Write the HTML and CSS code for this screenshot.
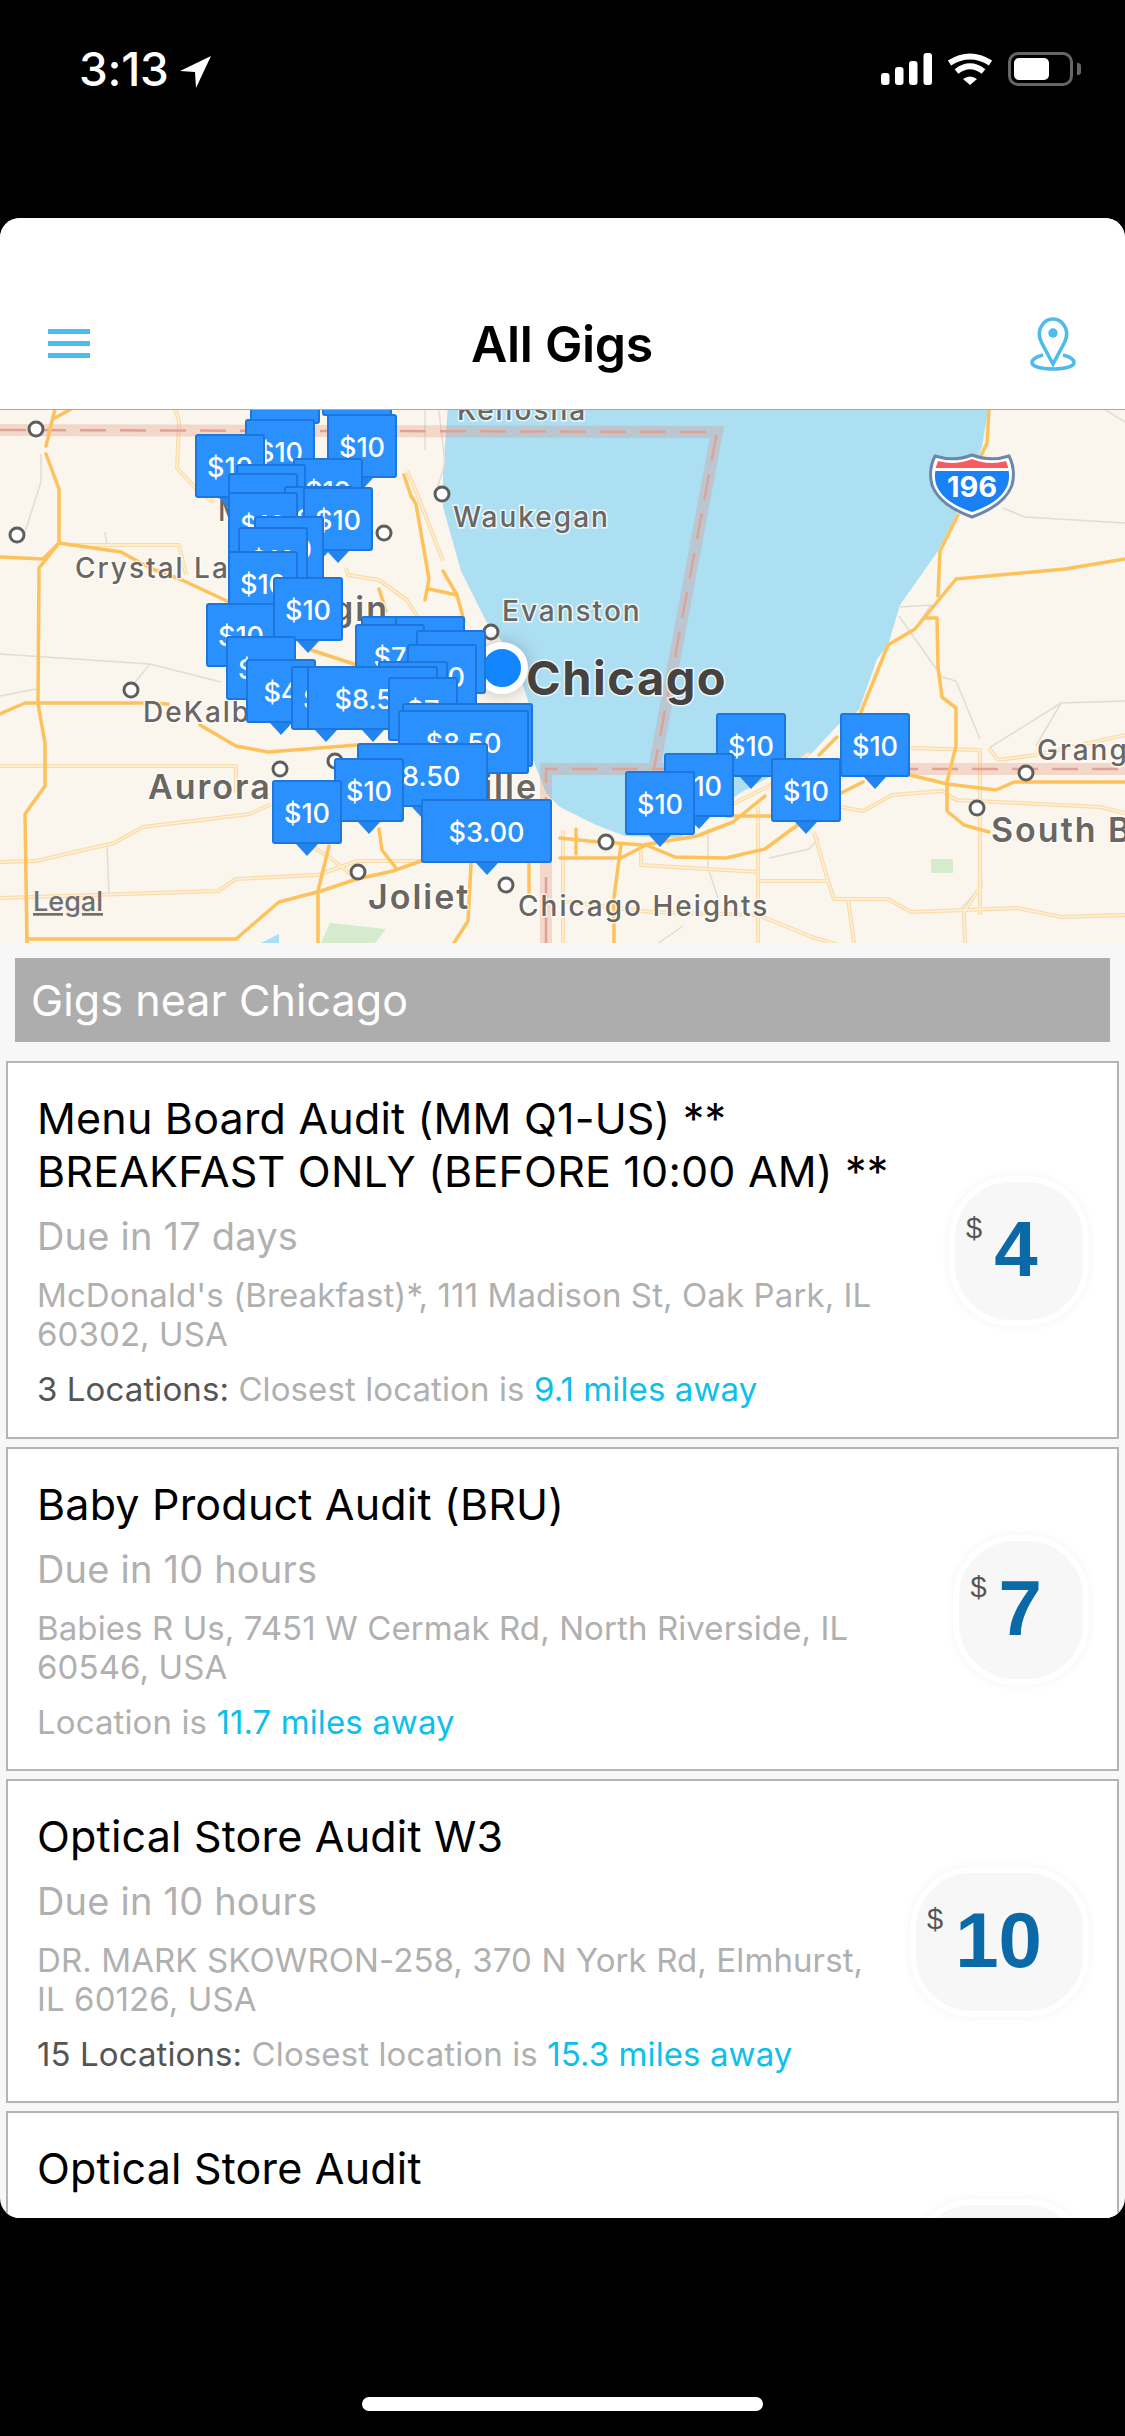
FILE: index.html
```html
<!DOCTYPE html>
<html lang="en">
<head>
<meta charset="utf-8">
<title>All Gigs</title>
<link rel="stylesheet" href="styles.css">
</head>
<body>
<div class="phone">
  <header class="status">
    <div class="status-left">
      <span class="time">3:13</span>
      <svg class="loc-arrow" viewBox="0 0 32 32"><path d="M31 0 0 15l15 1 1 16z"/></svg>
    </div>
    <div class="status-right">
      <svg class="signal" viewBox="0 0 52 32"><rect x="0" y="20" width="8.500" height="12" rx="3"/><rect x="14" y="14" width="8.500" height="18" rx="3"/><rect x="28" y="8" width="8.500" height="24" rx="3"/><rect x="42.500" y="0" width="8.500" height="32" rx="3"/></svg>
      <svg class="wifi" viewBox="0 0 46 32"><path class="wifi-arc" d="M2.500 10Q23-3 43.500 10"/><path class="wifi-arc" d="M9.500 18.500Q23 8 36.500 18.500"/><path class="wifi-fill" d="M16 26Q23 21 30 26L23 32Z"/></svg>
      <div class="battery"><div class="battery-level"></div></div>
      <div class="battery-nub"></div>
    </div>
  </header>

  <main class="screen">
    <nav class="nav">
      <div class="burger"><i></i><i></i><i></i></div>
      <h1 class="nav-title">All Gigs</h1>
      <svg class="nav-pin" viewBox="0 0 46 54"><path d="M23 47 11.500 25.500C8 18 9 12 12.500 7.500 15 4 19 2 23 2s8 2 10.500 5.500C37 12 38 18 34.500 25.500Z"/><circle class="nav-pin-dot" cx="23" cy="16" r="4.700"/><path d="M13 38C5 40 2 43 2 45.500 2 49.500 11 52 23 52s21-2.500 21-6.500c0-2.500-3-5.500-11-7.500"/></svg>
    </nav>

    <section class="map">
      <svg class="map-art" viewBox="0 410 1125 533" preserveAspectRatio="none">
        <defs>
          <g id="minor-roads">
            <path d="M0 766H236V793"/>
            <path d="M0 862 36 861 114 843 143 827 250 814 271 804"/>
            <path d="M0 898 218 891 236 879 318 875 357 861 446 861"/>
            <path d="M175 409 179 421 177 468 200 493 214 502"/>
            <path d="M68 545H179L186 575"/>
            <path d="M300 839 329 857 357 879"/>
            <path d="M346 568 348 575 379 580 407 600 425 629"/>
            <path d="M407 471 414 486 443 561"/>
            <path d="M911 748 980 750V915"/>
            <path d="M989 748 998 760 1036 755 1125 735"/>
            <path d="M841 807 863 811 892 795 942 791 956 800 1100 807 1125 813"/>
            <path d="M641 850V865L758 872V943"/>
            <path d="M760 881H828L834 899H888L911 912 1018 908 1061 917 1125 915"/>
            <path d="M814 832 828 881"/>
            <path d="M848 899 854 943"/>
            <path d="M978 890 964 912 965 943"/>
            <path d="M560 901 650 912 758 915 812 937 848 948"/>
            <path d="M809 753 769 786 733 804"/>
            <path d="M758 807V872"/>
            <path d="M563 830V943"/>
          </g>
          <clipPath id="shield-clip"><path d="M938 461Q955 466 972 459 989 466 1006 461 1011 472 1008 484 1002 502 972 512 942 502 936 484 933 472 938 461Z"/></clipPath>
        </defs>

        <rect class="land" x="0" y="410" width="1125" height="533"/>
        <path class="water" d="M448 405 443 471 443 507 461 571 486 621 514 657 529 704 532 757 546 793 560 807 596 825 625 836 680 838 740 793 812 753 837 726 859 710 877 659 888 645 900 605 938 551 956 515 982 447 989 405Z"/>
        <path class="park" d="M321 943 330 923 386 929 375 943Z"/>
        <rect class="park" x="931" y="859" width="22" height="14"/>
        <path class="pond" d="M261 943 279 934V943Z"/>

        <g class="thin">
          <path d="M41 454V482L25 532"/>
          <path d="M0 654 150 664 221 682"/>
          <path d="M150 664 132 686"/>
          <path d="M0 696 36 689"/>
          <path d="M107 843 109 896"/>
          <path d="M105 532 107 545"/>
          <path d="M439 411 445 464 437 489"/>
          <path d="M425 409V450"/>
          <path d="M899 616 942 677 956 681 980 739"/>
          <path d="M900 607 931 605 915 629"/>
          <path d="M989 748 1061 703 1125 701"/>
          <path d="M1061 703 1036 746"/>
          <path d="M1003 508 1025 517 1125 523"/>
          <path d="M1104 409 1125 422"/>
          <path d="M769 858 809 849 819 838"/>
          <path d="M708 829V868L719 901"/>
          <path d="M657 944 683 926"/>
          <path d="M980 836 982 886 958 912"/>
        </g>

        <use href="#minor-roads" class="minor-outer"/>
        <use href="#minor-roads" class="minor-inner"/>

        <path class="border-band" d="M0 430 717 432 654 769M546 943V769H1125"/>
        <path class="border-dash" d="M0 430 717 432 654 769M546 943V769H1125"/>

        <g class="road">
          <path d="M55 409 46 446"/>
          <path d="M55 418 71 409"/>
          <path d="M46 454 59 489V543L39 568 38 704 45 743V786L25 814 27 943"/>
          <path d="M0 557 43 559 59 543 121 552 150 568 182 580 229 602"/>
          <path d="M0 714 25 703H143L168 704"/>
          <path d="M200 725 236 746 268 752 357 745"/>
          <path d="M404 475 411 496 416 504 429 579 425 600"/>
          <path d="M429 589 457 595 464 621"/>
          <path d="M443 571 457 595"/>
          <path d="M27 939H236L279 902 321 891 357 879 393 871 421 861"/>
          <path d="M318 943V891L329 846"/>
          <path d="M379 829 382 850 396 868"/>
          <path d="M471 864 468 921 454 943"/>
          <path d="M529 864V893"/>
          <path d="M379 589 386 611"/>
          <path d="M311 650 354 664"/>
          <path d="M989 409 987 443 980 458"/>
          <path d="M958 515 940 551 938 596"/>
          <path d="M1125 559 1065 569 956 579 915 629 888 645 861 712"/>
          <path d="M924 618H937L938 667 942 697 956 708V746L947 782V811L964 825 989 832"/>
          <path d="M837 737 819 755"/>
          <path d="M910 775 947 784 996 790 1014 782H1125"/>
          <path d="M560 838 589 841 643 845 697 836 733 822 765 796"/>
          <path d="M646 845 675 857 726 858 765 849 841 793 863 782"/>
          <path d="M560 858H621L646 845"/>
          <path d="M621 845 614 897V943"/>
          <path d="M576 829V854"/>
          <path d="M726 816H773"/>
        </g>

        <text class="lbl" x="457" y="420">Kenosha</text>
        <text class="lbl" x="453" y="527">Waukegan</text>
        <text class="lbl" x="502" y="621">Evanston</text>
        <text class="lbl" x="75" y="578">Crystal Lake</text>
        <text class="lbl" x="218" y="521">M</text>
        <text class="lbl lbl-mid lbl-end" x="389" y="621">Elgin</text>
        <text class="lbl" x="143" y="722">DeKalb</text>
        <text class="lbl lbl-mid" x="148" y="799">Aurora</text>
        <text class="lbl lbl-mid lbl-end" x="538" y="799">Naperville</text>
        <text class="lbl lbl-mid" x="368" y="909">Joliet</text>
        <text class="lbl" x="518" y="916">Chicago Heights</text>
        <text class="lbl" x="1037" y="760">Granger</text>
        <text class="lbl lbl-mid" x="991" y="842">South Bend</text>
        <text class="lbl lbl-big" x="526" y="695">Chicago</text>
        <text class="legal" x="33" y="911">Legal</text>

        <g class="cities">
          <circle cx="36" cy="429" r="7"/><circle cx="442" cy="494" r="7"/><circle cx="17" cy="535" r="7"/><circle cx="384" cy="533" r="7"/><circle cx="491" cy="632" r="7"/><circle cx="131" cy="690" r="7"/><circle cx="280" cy="769" r="7"/><circle cx="335" cy="761" r="7"/><circle cx="358" cy="872" r="7"/><circle cx="506" cy="885" r="7"/><circle cx="606" cy="842" r="7"/><circle cx="1026" cy="773" r="7"/><circle cx="977" cy="808" r="7"/>
        </g>

        <circle class="me" cx="502" cy="668" r="22.500"/>

        <path class="shield-outer" d="M935 456Q954 462 972 455 991 462 1009 456 1016 470 1012 485 1005 505 972 517 939 505 932 485 928 470 935 456Z"/>
        <g clip-path="url(#shield-clip)">
          <rect class="shield-red" x="930" y="450" width="84" height="18"/>
          <rect class="shield-blue" x="930" y="471" width="84" height="50"/>
        </g>
        <text class="shield-text" x="972" y="497">196</text>
      </svg>

      <div class="pin" style="left:250px;top:-50px">$10</div>
      <div class="pin" style="left:337px;top:-64px">$10</div>
      <div class="pin" style="left:322px;top:-58px">$10</div>
      <div class="pin" style="left:327px;top:4px">$10</div>
      <div class="pin" style="left:245px;top:9px">$10</div>
      <div class="pin" style="left:195px;top:24px">$10</div>
      <div class="pin" style="left:293px;top:48px">$10</div>
      <div class="pin" style="left:236px;top:54px">$10</div>
      <div class="pin" style="left:228px;top:63px">$10</div>
      <div class="pin" style="left:284px;top:76px">$10</div>
      <div class="pin" style="left:228px;top:82px">$10</div>
      <div class="pin" style="left:303px;top:77px">$10</div>
      <div class="pin" style="left:254px;top:106px">$10</div>
      <div class="pin" style="left:238px;top:117px">$10</div>
      <div class="pin" style="left:228px;top:141px">$10</div>
      <div class="pin" style="left:206px;top:193px">$10</div>
      <div class="pin" style="left:273px;top:167px">$10</div>
      <div class="pin" style="left:226px;top:226px">$10</div>
      <div class="pin" style="left:361px;top:206px">$10</div>
      <div class="pin" style="left:395px;top:206px">$10</div>
      <div class="pin" style="left:355px;top:214px">$7</div>
      <div class="pin" style="left:416px;top:220px">$10</div>
      <div class="pin" style="left:407px;top:234px">$10</div>
      <div class="pin" style="left:246px;top:249px">$4</div>
      <div class="pin" style="left:291px;top:256px">$10</div>
      <div class="pin" style="left:378px;top:251px">$10</div>
      <div class="pin pin-wide" style="left:307px;top:256px">$8.50</div>
      <div class="pin" style="left:388px;top:267px">$7</div>
      <div class="pin pin-wide" style="left:402px;top:293px">$8.50</div>
      <div class="pin pin-wide" style="left:398px;top:300px">$8.50</div>
      <div class="pin pin-wide" style="left:357px;top:333px">$8.50</div>
      <div class="pin" style="left:334px;top:348px">$10</div>
      <div class="pin" style="left:272px;top:370px">$10</div>
      <div class="pin pin-wide" style="left:421px;top:389px">$3.00</div>
      <div class="pin" style="left:716px;top:303px">$10</div>
      <div class="pin" style="left:664px;top:343px">$10</div>
      <div class="pin" style="left:625px;top:361px">$10</div>
      <div class="pin" style="left:840px;top:303px">$10</div>
      <div class="pin" style="left:771px;top:348px">$10</div>
    </section>

    <h2 class="section-head">Gigs near Chicago</h2>

    <ul class="gigs">
      <li class="gig gig-tall">
        <div class="gig-body">
          <h3 class="gig-title">Menu Board Audit (MM Q1-US) **<br>BREAKFAST ONLY (BEFORE 10:00 AM) **</h3>
          <p class="gig-due">Due in 17 days</p>
          <p class="gig-addr">McDonald's (Breakfast)*, 111 Madison St, Oak Park, IL<br>60302, USA</p>
          <p class="gig-loc"><span class="loc-count">3 Locations:</span> Closest location is <span class="loc-miles">9.1 miles away</span></p>
        </div>
        <div class="price"><span class="price-cur">$</span><span class="price-num">4</span></div>
      </li>
      <li class="gig">
        <div class="gig-body">
          <h3 class="gig-title">Baby Product Audit (BRU)</h3>
          <p class="gig-due">Due in 10 hours</p>
          <p class="gig-addr">Babies R Us, 7451 W Cermak Rd, North Riverside, IL<br>60546, USA</p>
          <p class="gig-loc">Location is <span class="loc-miles">11.7 miles away</span></p>
        </div>
        <div class="price price-tight"><span class="price-cur">$</span><span class="price-num">7</span></div>
      </li>
      <li class="gig">
        <div class="gig-body">
          <h3 class="gig-title">Optical Store Audit W3</h3>
          <p class="gig-due">Due in 10 hours</p>
          <p class="gig-addr">DR. MARK SKOWRON-258, 370 N York Rd, Elmhurst,<br>IL 60126, USA</p>
          <p class="gig-loc"><span class="loc-count">15 Locations:</span> Closest location is <span class="loc-miles">15.3 miles away</span></p>
        </div>
        <div class="price"><span class="price-cur">$</span><span class="price-num">10</span></div>
      </li>
      <li class="gig gig-cut">
        <div class="gig-body">
          <h3 class="gig-title">Optical Store Audit</h3>
          <p class="gig-due">Due in 10 hours</p>
        </div>
        <div class="price"><span class="price-cur">$</span><span class="price-num">10</span></div>
      </li>
    </ul>
  </main>

  <footer class="home"><div class="home-bar"></div></footer>
</div>
</body>
</html>
```

FILE: styles.css
```css
* { box-sizing: border-box; }
html, body { margin: 0; padding: 0; }
body { background: #000; font-family: Inter, "Liberation Sans", sans-serif; }
.phone { width: 1125px; height: 2436px; overflow: hidden; background: #000; display: flex; flex-direction: column; }

/* status bar */
.status { height: 218px; flex: none; display: flex; justify-content: space-between; align-items: flex-start; padding: 52px 44px 0 79px; color: #fff; }
.status-left { display: flex; align-items: flex-start; gap: 11px; }
.time { font-size: 46px; font-weight: 500; line-height: 34px; letter-spacing: -0.3px; }
.loc-arrow { width: 32px; height: 32px; margin-top: 4px; fill: #fff; }
.status-right { display: flex; align-items: flex-start; }
.signal { width: 52px; height: 32px; fill: #fff; margin-top: 1px; }
.wifi { width: 46px; height: 32px; margin-left: 14px; margin-top: 1px; }
.wifi-arc { fill: none; stroke: #fff; stroke-width: 6; }
.wifi-fill { fill: #fff; }
.battery { width: 65px; height: 34px; margin-left: 15px; border: 3px solid #666; border-radius: 10px; padding: 3px; }
.battery-level { width: 35px; height: 22px; background: #fff; border-radius: 5px; }
.battery-nub { width: 4px; height: 12px; margin: 11px 0 0 4px; background: #666; border-radius: 0 3px 3px 0; }

/* main card */
.screen { height: 2000px; flex: none; background: #f7f7f7; border-radius: 20px; overflow: hidden; display: flex; flex-direction: column; }
.nav { height: 192px; flex: none; background: #fff; border-bottom: 1px solid #a8a8a8; display: grid; grid-template-columns: 1fr auto 1fr; align-items: center; padding: 60px 49px 0 48px; }
.burger { width: 42px; height: 29px; display: flex; flex-direction: column; justify-content: space-between; }
.burger i { display: block; height: 5px; background: #4dbdee; }
.nav-title { margin: 0; font-size: 50px; line-height: 60px; font-weight: 600; color: #000; letter-spacing: -0.3px; }
.nav-pin { width: 46px; height: 54px; justify-self: end; fill: none; stroke: #4dbbec; stroke-width: 3.600; }
.nav-pin-dot { fill: #4dbbec; stroke: none; }

/* map */
.map { height: 533px; flex: none; position: relative; overflow: hidden; background: #faf5ed; }
.map-art { display: block; width: 1125px; height: 533px; }
.land { fill: #faf5ed; }
.water { fill: #addff3; }
.park { fill: #d5ebcb; }
.pond { fill: #a9dff5; }
.thin { fill: none; stroke: #e2ddd4; stroke-width: 1.500; }
.minor-outer { fill: none; stroke: #fcdca6; stroke-width: 4; stroke-linejoin: round; }
.minor-inner { fill: none; stroke: #fbf2e2; stroke-width: 1.400; stroke-linejoin: round; }
.road { fill: none; stroke: #fdc25c; stroke-width: 3.500; stroke-linejoin: round; stroke-linecap: round; }
.border-band { fill: none; stroke: rgba(226, 130, 110, 0.26); stroke-width: 12; }
.border-dash { fill: none; stroke: #dfa294; stroke-width: 2.500; stroke-dasharray: 26 14; }
.lbl { font-family: Inter, "Liberation Sans", sans-serif; font-size: 28px; font-weight: 500; letter-spacing: 2px; fill: #6a6661; stroke: rgba(255, 255, 255, 0.75); stroke-width: 3px; paint-order: stroke; }
.lbl-mid { font-size: 34px; font-weight: 600; }
.lbl-end { text-anchor: end; }
.lbl-big { font-size: 47px; font-weight: 700; letter-spacing: 1.500px; fill: #45423f; }
.legal { font-family: Inter, "Liberation Sans", sans-serif; font-size: 27px; font-weight: 500; fill: #6f6f6f; text-decoration: underline; }
.cities circle { fill: #fff; stroke: #5e5e5e; stroke-width: 3; }
.me { fill: #1285ff; stroke: #fff; stroke-width: 7; filter: drop-shadow(0 0 8px rgba(60, 60, 60, 0.3)); }
.shield-outer { fill: #fff; stroke: #6d86ab; stroke-width: 3; }
.shield-red { fill: #f65c5f; }
.shield-blue { fill: #1a80f6; }
.shield-text { font-family: Inter, "Liberation Sans", sans-serif; font-size: 29px; font-weight: 700; fill: #fff; text-anchor: middle; }

.pin { position: absolute; width: 70px; height: 64px; background: #2990fe; border: 2px solid #1c76db; border-radius: 3px; color: #fff; font-size: 27px; font-weight: 500; display: flex; align-items: center; justify-content: center; padding-top: 3px; white-space: nowrap; overflow: visible; }
.pin::after { content: ""; position: absolute; left: 50%; bottom: -14px; margin-left: -11px; border-style: solid; border-width: 12px 11px 0; border-color: #2285ee transparent transparent; }
.pin-wide { width: 131px; }

/* list */
.section-head { flex: none; height: 84px; margin: 15px 15px 19px; padding-left: 16px; background: #adadad; color: #fff; font-size: 43px; font-weight: 400; letter-spacing: 0.1px; display: flex; align-items: center; }
.gigs { list-style: none; margin: 0; padding: 0 6px; display: flex; flex-direction: column; gap: 8px; }
.gig { display: flex; align-items: center; justify-content: space-between; background: #fff; border: 2px solid #b4b4b4; padding: 29px 28px 27px 29px; }
.gig-tall { padding-bottom: 28px; }
.gig-cut { min-height: 324px; align-items: center; }
.gig-cut .gig-body { align-self: flex-start; }
.gig-title { margin: 0; font-size: 43px; line-height: 53px; font-weight: 400; letter-spacing: 0.2px; color: #000; white-space: nowrap; }
.gig-due { margin: 15px 0 0; font-size: 38px; line-height: 46px; letter-spacing: 0.2px; color: #b0b0b0; }
.gig-addr { margin: 17px 0 0; font-size: 33px; line-height: 39px; letter-spacing: 0.1px; color: #b0b0b0; white-space: nowrap; }
.gig-loc { margin: 16px 0 0; font-size: 33px; line-height: 39px; letter-spacing: 0.1px; color: #b0b0b0; white-space: nowrap; }
.loc-count { color: #555; }
.loc-miles { color: #0dc0ea; }

.price { flex: none; height: 150px; min-width: 140px; display: flex; align-items: flex-start; gap: 12px; padding: 31px 41px 0 11px; background: #f7f7f7; border: 6px solid #fff; border-radius: 62px; box-shadow: 0 0 10px rgba(0, 0, 0, 0.05); font-family: "Liberation Sans", Arial, sans-serif; }
.price-tight { min-width: 0; }
.price-cur { font-size: 29px; line-height: 30px; color: #555; }
.price-num { font-size: 78px; line-height: 68px; font-weight: 700; color: #0b69a8; margin-top: 2px; }

/* home indicator */
.home { flex: 1; display: flex; justify-content: center; padding-top: 179px; }
.home-bar { width: 401px; height: 14px; background: #fff; border-radius: 7px; }
```
